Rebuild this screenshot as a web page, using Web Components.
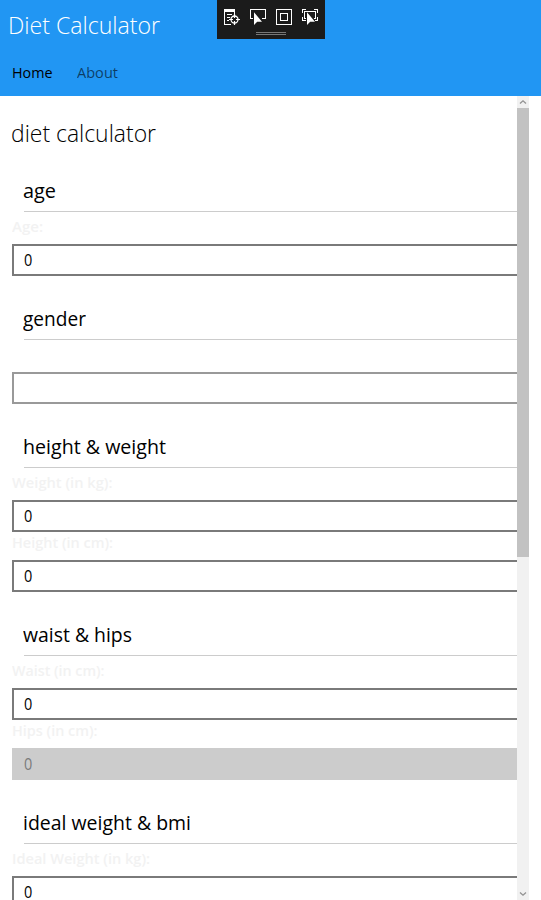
<!DOCTYPE html>
<html lang="en">
<head>
<meta charset="utf-8">
<title>Diet Calculator</title>
<style>
html, body { margin: 0; height: 100%; overflow: hidden; background: #fff; }
body { font-family: "Open Sans", "Noto Sans", sans-serif; color: #000; }
</style>
</head>
<body>
<diet-app></diet-app>
<script>
const define = (name, html, setup) => customElements.define(name, class extends HTMLElement {
  connectedCallback() {
    if (this.shadowRoot) return;
    const t = document.createElement('template');
    t.innerHTML = html;
    this.attachShadow({ mode: 'open' }).append(t.content.cloneNode(true));
    if (setup) setup(this, this.shadowRoot);
  }
});

// Text condensed or widened to a given advance width.
define('fit-text', `<style>
:host { display: block; white-space: nowrap; }
span { display: inline-block; transform-origin: 0 50%; }
</style><span></span>`, (el, root) => {
  const s = root.querySelector('span');
  s.textContent = el.getAttribute('text');
  const want = +el.getAttribute('width');
  el.style.width = want + 'px';
  s.style.transform = `scaleX(${want / s.getBoundingClientRect().width})`;
});

define('debug-toolbar', `<style>
:host { display: block; width: 108px; height: 39px; background: #1b1b1b; }
svg { display: block; }
</style>
<svg width="108" height="39" fill="none" stroke="#fff" shape-rendering="crispEdges">
  <path d="M7.5 9v16M7 24.5h7M10 14.5h5M10 17.5h3M10 20.5h2M17.5 12v2"/>
  <path d="M7 9h11v3H7z" fill="#fff" stroke="none"/>
  <g shape-rendering="auto"><circle cx="17.5" cy="19.5" r="3.500" stroke-width="1.300"/><path d="M17.500 14v4M17.500 21v4M12 19.500h4M19 19.500h4" stroke-width="1.200"/></g>
  <path d="M36 18.500h-2.500v-9h15v9H45"/>
  <path d="M37 12.300v12.700l3.200-3.200h4.800z" fill="#fff" stroke="none" shape-rendering="auto"/>
  <path d="M59.500 9.500h15v15h-15zM63.500 13.500h7v7h-7z"/>
  <path d="M85.500 13v-3.500H89M97 9.500h3.500V13M85.500 17v3.500H89M100.500 17v3.500H98M89 18.500h-1.500v-7h11v7H97"/>
  <path d="M90 12.300v12.700l3.200-3.200h4.800z" fill="#fff" stroke="none" shape-rendering="auto"/>
  <path d="M39 32.500h30M39 34.500h30" stroke="#777"/>
</svg>`);

define('app-header', `<style>
:host { display: block; position: relative; height: 96px; background: #2196f3; box-sizing: border-box; padding-top: 9px; }
.title { font-size: 24px; font-weight: 340; line-height: 32px; color: #fff; margin-left: 8px; }
nav { display: flex; gap: 24px; padding: 21px 0 0 12px; font-size: 15px; line-height: 20px; }
.off { color: rgba(0,0,0,.6); }
debug-toolbar { position: absolute; left: 217px; top: 0; }
</style>
<fit-text class="title" text="Diet Calculator" width="152"></fit-text>
<nav><fit-text text="Home" width="40.500"></fit-text><fit-text class="off" text="About" width="41"></fit-text></nav>
<debug-toolbar></debug-toolbar>`);

define('form-section', `<style>
:host { display: block; }
header { height: 64px; box-sizing: border-box; margin-left: 12px; padding-top: 29px; border-bottom: 1px solid #ccc; font-size: 20px; line-height: 28px; }
fit-text { margin-left: -1px; }
.body { padding-top: 4px; }
</style><header></header><div class="body"><slot></slot></div>`, (el, root) => {
  root.querySelector('header').innerHTML = `<fit-text text="${el.getAttribute('heading').replace('&', '&amp;')}" width="${el.getAttribute('w')}"></fit-text>`;
});

define('form-field', `<style>
:host { display: block; --line: #7a7a7a; }
.label { height: 28px; font-size: 15px; font-weight: 600; line-height: 20px; color: #f2f2f2; }
.box { height: 32px; box-sizing: border-box; border: 2px solid var(--line); border-right: 0; padding: 6px 0 0 10px; font-size: 16px; line-height: 16px; }
:host([kind=select]) { --line: #999; }
:host([kind=disabled]) { --line: #ccc; }
:host([kind=disabled]) .box { background: #ccc; color: #7a7a7a; }
</style><div class="label"></div><div class="box"></div>`, (el, root) => {
  if (el.hasAttribute('label'))
    root.querySelector('.label').innerHTML = `<fit-text text="${el.getAttribute('label')}" width="${el.getAttribute('w')}"></fit-text>`;
  if (el.hasAttribute('value'))
    root.querySelector('.box').innerHTML = `<fit-text text="${el.getAttribute('value')}" width="8.300"></fit-text>`;
});

define('scroll-bar', `<style>
:host { display: flex; flex-direction: column; width: 12px; background: #f1f1f1; }
.thumb { height: 449px; background: #c2c2c2; }
.space { flex: 1; }
svg { display: block; fill: none; stroke: #929292; stroke-width: 1.300; }
</style>
<svg width="12" height="12"><path d="M3 7.500 6 4.800l3 2.700"/></svg>
<div class="thumb"></div><div class="space"></div>
<svg width="12" height="12"><path d="M3 4.500 6 7.200l3-2.700"/></svg>`);

define('diet-app', `<style>
:host { display: flex; flex-direction: column; height: 900px; width: 541px; overflow: hidden; }
.view { flex: 1; min-height: 0; display: flex; padding-right: 12px; }
main { flex: 1; min-width: 0; overflow: hidden; padding-left: 12px; }
.h1 { height: 31px; padding-top: 21px; font-size: 24px; font-weight: 340; line-height: 32px; margin-left: -1px; }
</style>
<app-header></app-header>
<div class="view">
  <main>
    <fit-text class="h1" text="diet calculator" width="145"></fit-text>
    <form-section heading="age" w="33"><form-field label="Age:" w="31" value="0"></form-field></form-section>
    <form-section heading="gender" w="63"><form-field kind="select"></form-field></form-section>
    <form-section heading="height &amp; weight" w="143">
      <form-field label="Weight (in kg):" w="100.500" value="0"></form-field>
      <form-field label="Height (in cm):" w="101" value="0"></form-field>
    </form-section>
    <form-section heading="waist &amp; hips" w="109">
      <form-field label="Waist (in cm):" w="92.500" value="0"></form-field>
      <form-field label="Hips (in cm):" w="85.500" value="0" kind="disabled"></form-field>
    </form-section>
    <form-section heading="ideal weight &amp; bmi" w="168">
      <form-field label="Ideal Weight (in kg):" w="138" value="0"></form-field>
    </form-section>
  </main>
  <scroll-bar></scroll-bar>
</div>`);
</script>
</body>
</html>
